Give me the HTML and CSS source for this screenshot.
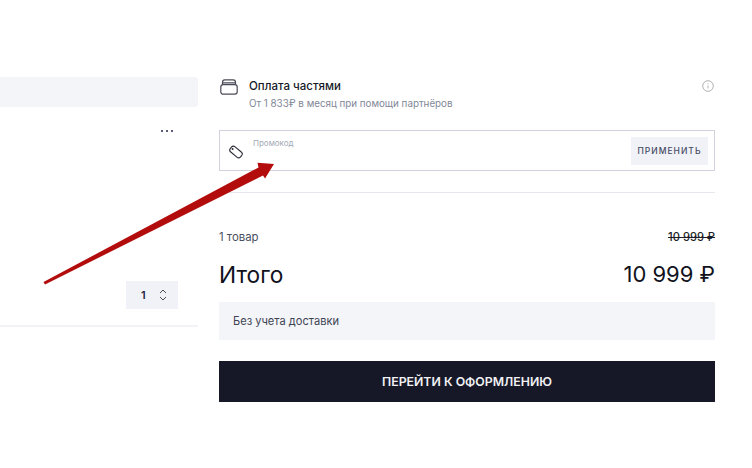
FILE: index.html
```html
<!DOCTYPE html>
<html lang="ru">
<head>
<meta charset="utf-8">
<title>Корзина</title>
<link rel="stylesheet" href="styles.css">
</head>
<body>
<div class="page">
  <section class="left">
    <div class="left-banner"></div>
    <div class="more"><i></i><i></i><i></i></div>
    <div class="stepper-row">
      <div class="stepper">
        <span class="qty">1</span>
        <svg class="chev" width="8" height="12" viewBox="0 0 8 12" fill="none" stroke="#4a4c5a" stroke-width="1"><path d="M1 4 4 1l3 3M1 8l3 3 3-3"/></svg>
      </div>
    </div>
    <div class="left-rule"></div>
  </section>
  <section class="right">
    <div class="parts">
      <svg class="parts-icon" width="18" height="16" viewBox="0 0 18 16" fill="none" stroke="#4a4b57" stroke-width="1.2"><rect x=".8" y="5.6" width="16.4" height="9.6" rx="2.4"/><path d="M2.5 5.6V3.2C2.5 1.8 3.4.8 4.8.8h8.4c1.4 0 2.3 1 2.3 2.4v2.4M2.5 3.8h13"/></svg>
      <div class="parts-text">
        <div class="parts-title">Оплата частями</div>
        <div class="parts-sub">От 1 833₽ в месяц при помощи партнёров</div>
      </div>
      <svg class="info" width="12" height="12" viewBox="0 0 12 12" fill="none" stroke="#a9a9ae" stroke-width=".9"><circle cx="6" cy="6" r="5.3"/><path d="M6 5.5v3M6 3.4v.9"/></svg>
    </div>
    <div class="promo">
      <svg class="tag" width="16" height="16" viewBox="0 0 16 16" fill="none" stroke="#2b2c38" stroke-width="1.1"><rect x="1.4" y="4.6" width="13.2" height="6.8" rx="2.6" transform="rotate(40 8 8)"/><circle cx="4.6" cy="4.9" r=".45"/></svg>
      <span class="promo-label">Промокод</span>
      <button class="apply">ПРИМЕНИТЬ</button>
    </div>
    <div class="rule"></div>
    <div class="line">
      <span class="line-label">1 товар</span>
      <span class="line-price">10 999 ₽</span>
    </div>
    <div class="total">
      <span class="total-label">Итого</span>
      <span class="total-price">10 999 ₽</span>
    </div>
    <div class="note">Без учета доставки</div>
    <button class="checkout">ПЕРЕЙТИ К ОФОРМЛЕНИЮ</button>
  </section>
</div>
<svg class="arrow" width="752" height="468" viewBox="0 0 752 468"><path d="M43.5 282 258.5 167.5 257.5 162.8 274 164 265 178.5 263 175.5 45 284.5Z" fill="#b30c0c"/></svg>
</body>
</html>
```
FILE: styles.css
```css
* { box-sizing: border-box; }
html, body { margin: 0; height: 100%; background: #fff; overflow: hidden; }
body { font-family: Inter, "Liberation Sans", sans-serif; color: #161827; position: relative; }
.page { display: flex; gap: 21px; padding-top: 77px; width: 715px; }
.left { width: 198px; display: flex; flex-direction: column; }
.left-banner { height: 30px; background: #f4f5f9; border-radius: 0 3px 3px 0; }
.more { display: flex; gap: 2.6px; justify-content: flex-end; padding: 23px 25px 0 0; height: 47px; }
.more i { width: 2.4px; height: 2.4px; background: #23234f; border-radius: 50%; }
.stepper-row { display: flex; justify-content: flex-end; padding: 127px 20px 0 0; margin-bottom: 16px; }
.stepper { width: 52px; height: 28px; background: #f1f2f7; display: flex; align-items: center; padding-left: 15px; gap: 13px; }
.qty { font-size: 11px; font-weight: 600; color: #1e2440; width: 5px; }
.left-rule { height: 2px; background: #f2f2f8; }
.right { width: 496px; display: flex; flex-direction: column; }
.parts { display: flex; align-items: flex-start; height: 53px; }
.parts-icon { margin-top: 2px; margin-left: 1px; margin-right: 11px; }
.parts-text { flex: 1; }
.parts-title { font-size: 11.5px; font-weight: 500; line-height: 18px; }
.parts-sub { font-size: 9.8px; color: #7f8796; line-height: 14px; margin-top: 2px; }
.info { margin-top: 3px; margin-right: 1px; }
.promo { height: 41px; border: 1.5px solid #d2d2df; display: flex; align-items: center; position: relative; padding: 0 6px 0 8px; }
.tag { margin-top: 2px; }
.promo-label { position: absolute; left: 33px; top: 6.5px; font-size: 8px; line-height: 11px; color: #a3aab5; }
.apply { margin-left: auto; width: 77px; height: 28px; border: 0; background: #f1f2f7; color: #464a63; font: 500 8.5px Inter, "Liberation Sans", sans-serif; letter-spacing: 1px; padding: 0; }
.rule { height: 1px; background: #e7e7ee; margin-top: 21px; }
.line { display: flex; justify-content: space-between; align-items: center; margin-top: 36px; height: 16px; font-size: 11.4px; }
.line-label { color: #4a5060; }
.line-price { font-size: 11.2px; font-weight: 500; color: #1c1d28; text-decoration: line-through; text-decoration-thickness: 1px; }
.total { display: flex; justify-content: space-between; align-items: center; margin-top: 14px; height: 30px; color: #11121c; }
.total-label { font-size: 22.7px; }
.total-price { font-size: 22px; }
.note { margin-top: 13px; height: 38px; background: #f4f5f9; display: flex; align-items: center; padding-left: 14px; font-size: 11.1px; color: #3e4453; }
.checkout { margin-top: 21px; height: 41px; border: 0; background: #161827; color: #f1f1f4; font: 600 12.3px Inter, "Liberation Sans", sans-serif; padding: 0; }
.arrow { position: absolute; left: 0; top: 0; pointer-events: none; }
```
